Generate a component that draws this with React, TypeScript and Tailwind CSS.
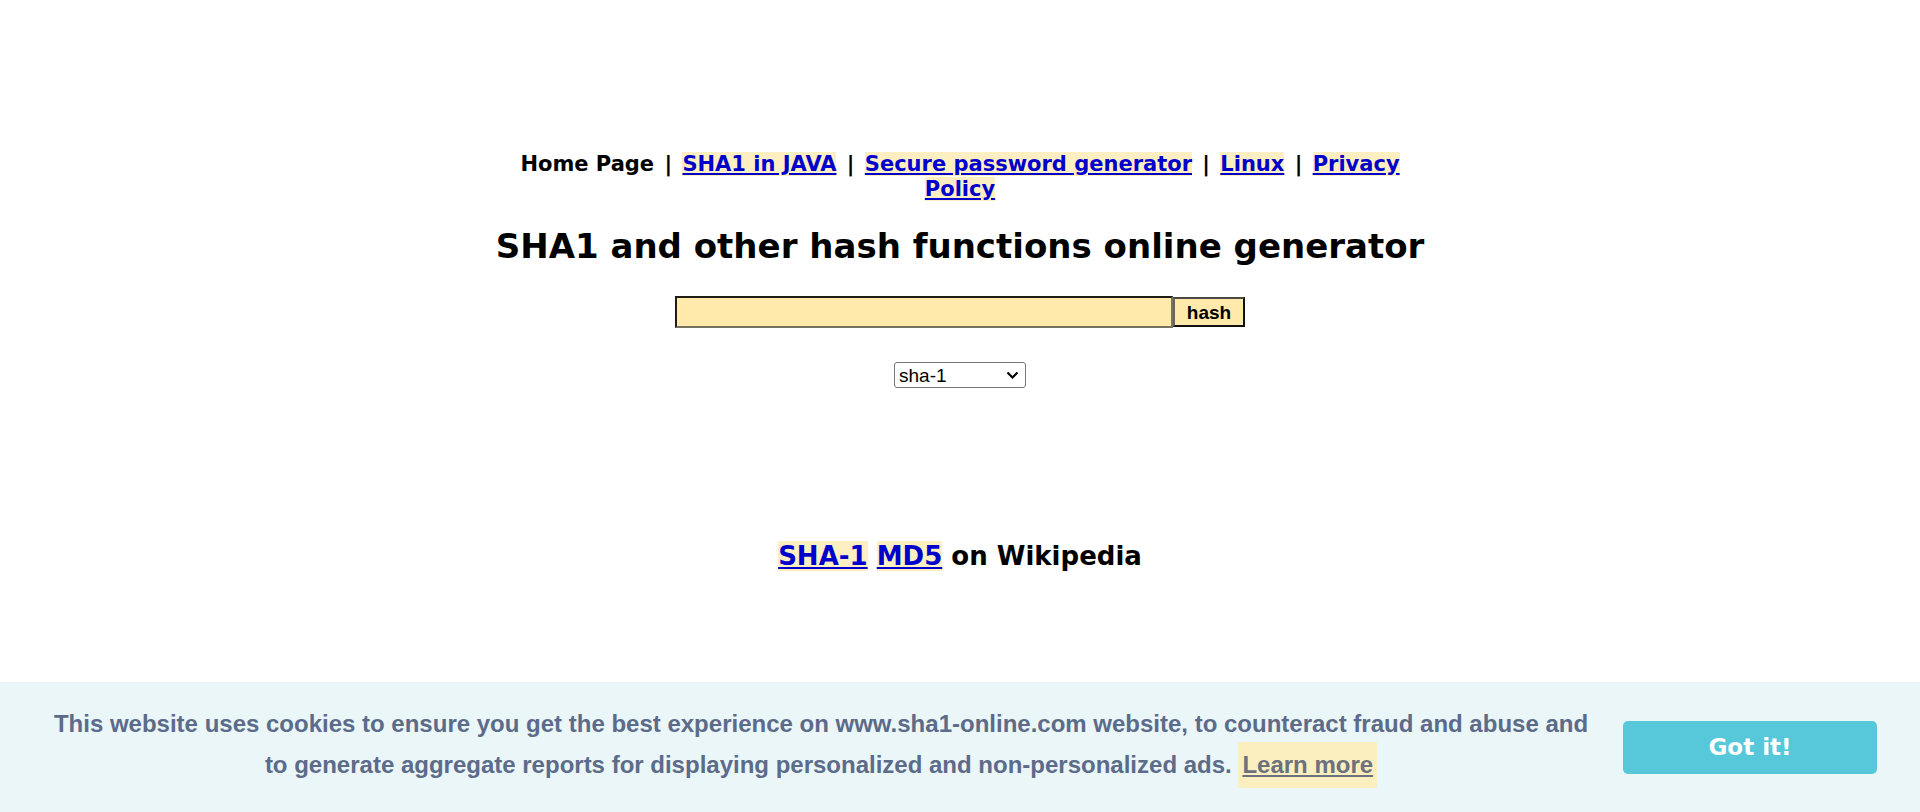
import React from 'react';

const verdana = "font-['DejaVu_Sans',Verdana,sans-serif]";
const arial = "font-['Liberation_Sans',Arial,Helvetica,sans-serif]";

const NavLink: React.FC<{ children: React.ReactNode }> = ({ children }) => (
  <a href="#" className="bg-[#fdefc2] text-[#0000cc] underline underline-offset-2">
    {children}
  </a>
);

const Sep = () => <span className="px-[3px]"> | </span>;

/** Main page body: nav, title, hash form and wiki links */
const HashPage: React.FC = () => (
  <main className={`flex-1 flex flex-col items-center pt-[152px] ${verdana}`}>
    <nav className="w-[900px] text-center text-[21px] leading-[25px] font-bold text-black">
      <span>Home Page</span>
      <Sep />
      <NavLink>SHA1 in JAVA</NavLink>
      <Sep />
      <NavLink>Secure password generator</NavLink>
      <Sep />
      <NavLink>Linux</NavLink>
      <Sep />
      <NavLink>Privacy Policy</NavLink>
    </nav>

    <h1 className="mt-[24px] text-[34px] leading-[40px] font-bold text-black">
      SHA1 and other hash functions online generator
    </h1>

    <form className="mt-[30px] flex items-center" onSubmit={(e) => e.preventDefault()}>
      <input
        type="text"
        className="w-[498px] h-[32px] bg-[#ffeaac] border-2 border-t-[#1f1d12] border-l-[#1f1d12] border-b-[#78725f] border-r-[#78725f] outline-none px-1"
      />
      <button
        type="submit"
        className={`w-[72px] h-[30px] bg-[#ffeaac] border-2 border-t-[#4a4a40] border-l-[#6a6658] border-b-[#111] border-r-[#111] text-[19px] leading-none font-bold text-black ${arial}`}
      >
        hash
      </button>
    </form>

    <div className="mt-[34px] relative w-[132px] h-[26px]">
      <select
        defaultValue="sha-1"
        className={`appearance-none w-full h-full border border-[#767676] rounded-[3px] bg-white pl-[4px] text-[19px] leading-none text-black ${arial}`}
      >
        <option value="sha-1">sha-1</option>
        <option value="md5">md5</option>
        <option value="sha-256">sha-256</option>
        <option value="sha-512">sha-512</option>
      </select>
      <svg
        className="absolute right-[7px] top-[9px] pointer-events-none"
        width="13"
        height="8"
        viewBox="0 0 13 8"
        fill="none"
        stroke="#000"
        strokeWidth="2.2"
      >
        <path d="M1.5 1.5l5 5 5-5" />
      </svg>
    </div>

    <div className="mt-[152px] text-[26px] leading-[32px] font-bold text-black">
      <NavLink>SHA-1</NavLink> <NavLink>MD5</NavLink> on Wikipedia
    </div>
  </main>
);

/** Cookie consent bar pinned to the bottom of the viewport */
const CookieBar: React.FC = () => (
  <div className="h-[130px] shrink-0 flex items-center pl-[43px] pr-[43px] bg-[#eaf6f7]">
    <p className={`flex-1 mr-[24px] text-center text-[24px] leading-[1.5] font-bold text-[#5b6b89] ${arial}`}>
      This website uses cookies to ensure you get the best experience on www.sha1-online.com website, to counteract fraud and abuse and
      to generate aggregate reports for displaying personalized and non-personalized ads.{' '}
      <a
        href="#"
        className="inline-block px-[4px] py-[5px] bg-[#fbefc0] text-[#6c717d] underline"
      >
        Learn more
      </a>
    </p>
    <button
      type="button"
      className={`w-[254px] h-[53px] rounded-[5px] bg-[#56c8d9] text-white text-[23px] font-bold ${verdana}`}
    >
      Got it!
    </button>
  </div>
);

export default function App() {
  return (
    <div className="h-screen flex flex-col bg-white overflow-hidden">
      <HashPage />
      <CookieBar />
    </div>
  );
}
